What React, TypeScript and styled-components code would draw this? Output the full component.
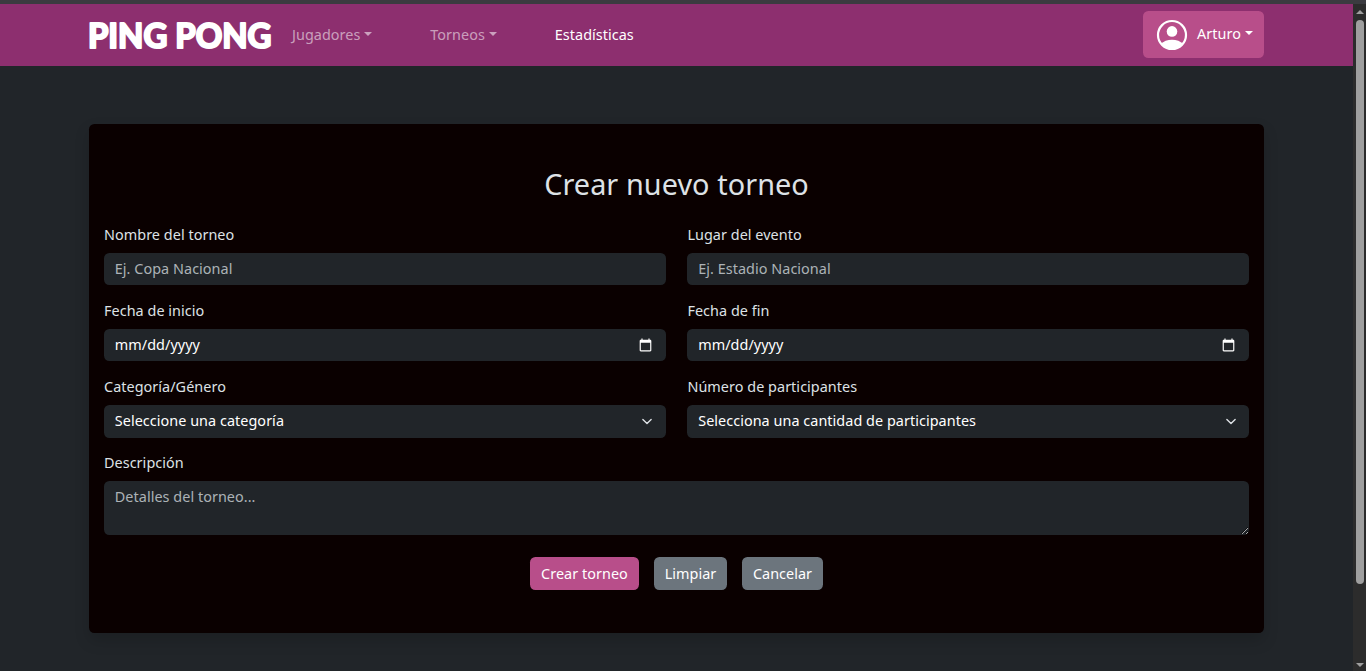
import React from "react";
import styled, { createGlobalStyle, css } from "styled-components";

const GlobalStyle = createGlobalStyle`
  *, *::before, *::after { box-sizing: border-box; }
  html, body { margin: 0; padding: 0; }
  body {
    background: #212529;
    color: #dee2e6;
    font-family: "Noto Sans", "Liberation Sans", sans-serif;
    font-size: 14.4px;
    letter-spacing: 0.05px;
    line-height: 22px;
    overflow: hidden;
  }
`;

const Shell = styled.div`
  display: grid;
  grid-template-columns: 1fr 13px;
  grid-template-rows: 4px 667px;
  height: 671px;
`;

const TopEdge = styled.div`
  grid-column: 1 / -1;
  background: #3b3b40;
`;

const Page = styled.div`
  background: #212529;
  overflow: hidden;
`;

const Navbar = styled.header`
  display: flex;
  align-items: center;
  height: 62px;
  padding: 0 89px 0 85px;
  background: #8d2f6f;
`;

const Logo = styled.svg`
  display: block;
  width: 192px;
  height: 54px;
  flex: none;
  margin-right: 15px;
  overflow: visible;
`;

const Nav = styled.nav`
  display: flex;
  flex: 1;
`;

const NavItem = styled.a<{ $active?: boolean; $gap?: number }>`
  color: ${(p) => (p.$active ? "#fff" : "rgba(255, 255, 255, 0.55)")};
  margin-right: ${(p) => p.$gap ?? 0}px;
  text-decoration: none;
  white-space: nowrap;
`;

const Caret = styled.span`
  display: inline-block;
  margin-left: 3.7px;
  vertical-align: 3.7px;
  border-top: 4.3px solid;
  border-right: 4.3px solid transparent;
  border-left: 4.3px solid transparent;
`;

const UserButton = styled.button`
  display: flex;
  align-items: center;
  width: 121px;
  height: 47px;
  margin-bottom: 1px;
  padding: 0 0 0 11px;
  border: 0;
  border-radius: 5.4px;
  background: #b84e8a;
  color: #fff;
  font: inherit;
  letter-spacing: inherit;
  white-space: nowrap;
`;

const UserName = styled.span`
  padding-bottom: 2px;
`;

const Avatar = styled.svg`
  width: 36px;
  height: 36px;
  margin: 1px 7px 0 0;
  flex: none;
`;

const Panel = styled.main`
  margin: 58px 89px 0;
  height: 509px;
  padding: 42px 15px 0;
  border-radius: 5.4px;
  background: #0a0000;
  box-shadow: 0 7.2px 14.4px rgba(0, 0, 0, 0.15);
`;

const Title = styled.h2`
  margin: 0 0 23px;
  font-size: 28.8px;
  font-weight: 400;
  letter-spacing: 0.08px;
  line-height: 35px;
  text-align: center;
`;

const Fields = styled.div`
  display: grid;
  grid-template-columns: 561.8px 561.8px;
  column-gap: 21.6px;
  grid-auto-rows: 76px;
`;

const Field = styled.div<{ $wide?: boolean }>`
  ${(p) => p.$wide && "grid-column: 1 / -1;"}
`;

const Label = styled.label`
  display: block;
  height: 22px;
  margin-bottom: 7px;
`;

const control = css`
  display: block;
  width: 100%;
  margin: 0;
  padding: 5px 10.8px;
  border: 0;
  border-radius: 5.4px;
  outline: 0;
  background: #212529;
  color: #fff;
  color-scheme: dark;
  font: inherit;
  letter-spacing: inherit;
  &::placeholder {
    color: rgba(222, 226, 230, 0.75);
    opacity: 1;
  }
`;

const Input = styled.input`
  ${control}
  height: 32px;
  padding-top: 4px;
  padding-bottom: 6px;
  &[type="date"] {
    padding-top: 5px;
    padding-bottom: 5px;
  }
  &::-webkit-datetime-edit-month-field,
  &::-webkit-datetime-edit-day-field,
  &::-webkit-datetime-edit-year-field {
    padding: 0;
  }
  &::-webkit-calendar-picker-indicator {
    width: 15px;
    height: 15px;
  }
`;

const Textarea = styled.textarea`
  ${control}
  height: 54px;
  resize: vertical;
`;

const SelectBox = styled.div`
  display: grid;
  align-items: center;
  > * {
    grid-area: 1 / 1;
  }
`;

const Select = styled.select`
  ${control}
  height: 33px;
  padding-top: 4px;
  padding-bottom: 6px;
  appearance: none;
`;

const Chevron = styled.svg`
  justify-self: end;
  width: 14px;
  height: 11px;
  margin-right: 11.4px;
  pointer-events: none;
`;

const Actions = styled.div`
  display: flex;
  justify-content: center;
  gap: 15px;
  margin-top: 29px;
`;

const Button = styled.button<{ $primary?: boolean; $width: number }>`
  width: ${(p) => p.$width}px;
  height: 33px;
  padding: 0;
  border: 0;
  border-radius: 5.4px;
  background: ${(p) => (p.$primary ? "#b84e8a" : "#6c757d")};
  color: #fff;
  font: inherit;
  letter-spacing: inherit;
`;

const ScrollTrack = styled.div`
  display: flex;
  flex-direction: column;
  align-items: center;
  background: #2c2c2c;
  padding: 6px 0 4px 1px;
`;

const ScrollThumb = styled.div`
  width: 8px;
  height: 564px;
  margin: 6px 0 auto;
  border-radius: 4px;
  background: #9f9f9f;
`;

const ScrollArrow = styled.svg`
  display: block;
  width: 8px;
  height: 4px;
  fill: #9f9f9f;
`;

function SelectField({ label, id, text }: { label: string; id: string; text: string }) {
  return (
    <Field>
      <Label htmlFor={id}>{label}</Label>
      <SelectBox>
        <Select id={id}>
          <option>{text}</option>
        </Select>
        <Chevron viewBox="0 0 16 16">
          <path d="m2 5 6 6 6-6" fill="none" stroke="#dee2e6" strokeWidth="2" strokeLinecap="round" strokeLinejoin="round" />
        </Chevron>
      </SelectBox>
    </Field>
  );
}

export default function App() {
  return (
    <>
      <GlobalStyle />
      <Shell>
        <TopEdge />
        <Page>
          <Navbar>
            <Logo viewBox="0 0 192 54" role="img" aria-label="PING PONG">
              <text
                x="3"
                y="39.6"
                fontFamily="Lato, sans-serif"
                fontWeight="700"
                fontSize="33.5"
                letterSpacing="0"
                fill="#fff"
                stroke="#fff"
                strokeWidth="2.2"
                strokeLinejoin="round"
                textLength="183.5"
                lengthAdjust="spacingAndGlyphs"
              >
                PING PONG
              </text>
            </Logo>
            <Nav>
              <NavItem $gap={58.2}>Jugadores<Caret /></NavItem>
              <NavItem $gap={58.2}>Torneos<Caret /></NavItem>
              <NavItem $active>Estadísticas</NavItem>
            </Nav>
            <UserButton>
              <Avatar viewBox="0 0 36 36" fill="#fff">
                <circle cx="18" cy="18" r="14" fill="none" stroke="#fff" strokeWidth="2.2" />
                <circle cx="18" cy="14.4" r="5.3" />
                <path d="M7 27C11.5 21.3 24.5 21.3 29 27A14.5 14.5 0 0 1 7 27Z" />
              </Avatar>
              <UserName>Arturo<Caret /></UserName>
            </UserButton>
          </Navbar>
          <Panel>
            <Title>Crear nuevo torneo</Title>
            <Fields>
              <Field>
                <Label htmlFor="nombre">Nombre del torneo</Label>
                <Input id="nombre" placeholder="Ej. Copa Nacional" />
              </Field>
              <Field>
                <Label htmlFor="lugar">Lugar del evento</Label>
                <Input id="lugar" placeholder="Ej. Estadio Nacional" />
              </Field>
              <Field>
                <Label htmlFor="inicio">Fecha de inicio</Label>
                <Input id="inicio" type="date" />
              </Field>
              <Field>
                <Label htmlFor="fin">Fecha de fin</Label>
                <Input id="fin" type="date" />
              </Field>
              <SelectField id="categoria" label="Categoría/Género" text="Seleccione una categoría" />
              <SelectField id="participantes" label="Número de participantes" text="Selecciona una cantidad de participantes" />
              <Field $wide>
                <Label htmlFor="descripcion">Descripción</Label>
                <Textarea id="descripcion" placeholder="Detalles del torneo..." />
              </Field>
            </Fields>
            <Actions>
              <Button $primary $width={109}>Crear torneo</Button>
              <Button $width={73}>Limpiar</Button>
              <Button $width={81}>Cancelar</Button>
            </Actions>
          </Panel>
        </Page>
        <ScrollTrack>
          <ScrollArrow viewBox="0 0 8 4"><path d="M4 0 8 4H0z" /></ScrollArrow>
          <ScrollThumb />
          <ScrollArrow viewBox="0 0 8 4"><path d="M0 0H8L4 4z" /></ScrollArrow>
        </ScrollTrack>
      </Shell>
    </>
  );
}
